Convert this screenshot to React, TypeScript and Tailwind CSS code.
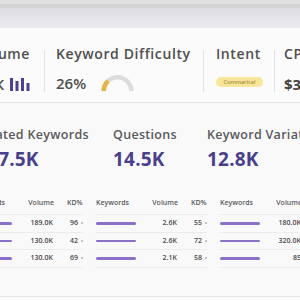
import React from "react";

const rowsData = [
  [
    ["189.0K", "96"],
    ["130.0K", "42"],
    ["130.0K", "69"],
  ],
  [
    ["2.6K", "55"],
    ["2.6K", "72"],
    ["2.1K", "58"],
  ],
  [
    ["180.0K", "61"],
    ["320.0K", "47"],
    ["85", "33"],
  ],
];

function Table({ rows }: { rows: string[][] }) {
  return (
    <div className="w-[112px] shrink-0">
      <div className="flex h-[17px] items-start border-b border-[#ececee] text-[7px] leading-[10px] font-semibold text-[#5a5a5a]">
        <div className="w-[46px] pl-[1px]">Keywords</div>
        <div className="w-[37px] text-right">Volume</div>
        <div className="pl-[13px]">KD%</div>
      </div>
      {rows.map((r, i) => (
        <div
          key={i}
          className="flex h-[17.5px] items-center border-b border-[#ececee] text-[7px] leading-[10px] font-semibold text-[#4a4a4a]"
        >
          <div className="w-[46px] pl-[1px]">
            <div className="h-[2.5px] w-[40px] rounded-full bg-[#8c6fc9]" />
          </div>
          <div className="w-[37px] text-right">{r[0]}</div>
          <div className="flex items-center gap-[3px] pl-[17px]">
            <span>{r[1]}</span>
            <span className="h-[2px] w-[2px] rounded-full bg-[#b0b0b0]" />
          </div>
        </div>
      ))}
    </div>
  );
}

export default function App() {
  return (
    <div className="h-[300px] w-[300px] overflow-hidden bg-[#f9f9fa] font-['Open_Sans',sans-serif]">
      <div className="h-[4px] bg-[#dfe0df]" />
      <div className="h-[4px] bg-[#d4d4d5]" />
      <div className="h-[20px] bg-gradient-to-b from-[#dedee2] to-[#ececf0]" />

      {/* metrics card */}
      <div className="h-[75px] border-b border-[#e6e6e9] bg-[#fbfbfb]">
        <div className="ml-[-42px] flex items-start pt-[18px] text-[#4f4f4f]">
          <div className="flex w-[72px] shrink-0 flex-col items-end">
            <div className="text-[14px] leading-[16px] font-semibold tracking-[0.6px]">Volume</div>
            <div className="mt-[13px] flex h-[18px] items-center gap-[6px]">
              <span className="text-[15px] font-semibold">2.7K</span>
              <svg width="20" height="14" viewBox="0 0 20 14">
                <rect x="0" y="1" width="3" height="13" fill="#4b3f9c" />
                <rect x="5.5" y="4" width="3" height="10" fill="#4b3f9c" />
                <rect x="11" y="1" width="3" height="13" fill="#4b3f9c" />
                <rect x="16.5" y="6" width="3" height="8" fill="#4b3f9c" />
              </svg>
            </div>
          </div>
          <div className="ml-[14px] mr-[11px] mt-[4px] h-[42px] w-px shrink-0 bg-[#e2e2e4]" />
          <div className="flex w-[136px] shrink-0 flex-col">
            <div className="whitespace-nowrap text-[14px] leading-[16px] font-semibold tracking-[0.6px]">
              Keyword Difficulty
            </div>
            <div className="mt-[11px] flex items-end">
              <span className="w-[45px] text-[15px] leading-[18px] font-semibold">26%</span>
              <svg width="33" height="19" viewBox="0 0 33 19">
                <path d="M 2.75 18 A 13.75 13.75 0 0 1 30.25 18" fill="none" stroke="#dcdcde" strokeWidth="4.5" />
                <path d="M 2.75 18 A 13.75 13.75 0 0 1 7.1 8" fill="none" stroke="#e6b547" strokeWidth="4.5" />
              </svg>
            </div>
          </div>
          <div className="ml-[11px] mr-[12px] mt-[4px] h-[42px] w-px shrink-0 bg-[#e2e2e4]" />
          <div className="flex w-[46px] shrink-0 flex-col">
            <div className="text-[14px] leading-[16px] font-semibold tracking-[0.6px]">Intent</div>
            <div className="mt-[15px] flex h-[10px] w-[47px] items-center justify-center rounded-full bg-[#f9e69a] text-[5.5px] font-semibold text-[#a58f3e]">
              Commarical
            </div>
          </div>
          <div className="ml-[12px] mr-[9px] mt-[4px] h-[42px] w-px shrink-0 bg-[#e2e2e4]" />
          <div className="flex shrink-0 flex-col">
            <div className="text-[14px] leading-[16px] font-semibold tracking-[0.6px]">CPC</div>
            <div className="mt-[13px] h-[18px] text-[15px] font-bold leading-[18px] text-[#444]">$3.20</div>
          </div>
        </div>
      </div>

      {/* counts */}
      <div className="ml-[-24px] flex pt-[24px]">
        {[
          ["Related Keywords", "217.5K", "w-[137px]"],
          ["Questions", "14.5K", "w-[94px]"],
          ["Keyword Variations", "12.8K", "w-[120px]"],
        ].map(([label, val, w]) => (
          <div key={label} className={`${w} shrink-0`}>
            <div className="whitespace-nowrap text-[12.5px] leading-[16px] font-semibold tracking-[0.3px] text-[#5a5a5a]">
              {label}
            </div>
            <div className="mt-[5px] text-[19px] leading-[22px] font-bold tracking-[0.2px] text-[#4a3f8c]">{val}</div>
          </div>
        ))}
      </div>

      {/* tables */}
      <div className="ml-[-29px] mt-[28px] flex gap-[12px]">
        {rowsData.map((r, i) => (
          <Table key={i} rows={r} />
        ))}
      </div>
      <div className="mt-[28px] h-px bg-[#e8e8ea]" />
    </div>
  );
}
